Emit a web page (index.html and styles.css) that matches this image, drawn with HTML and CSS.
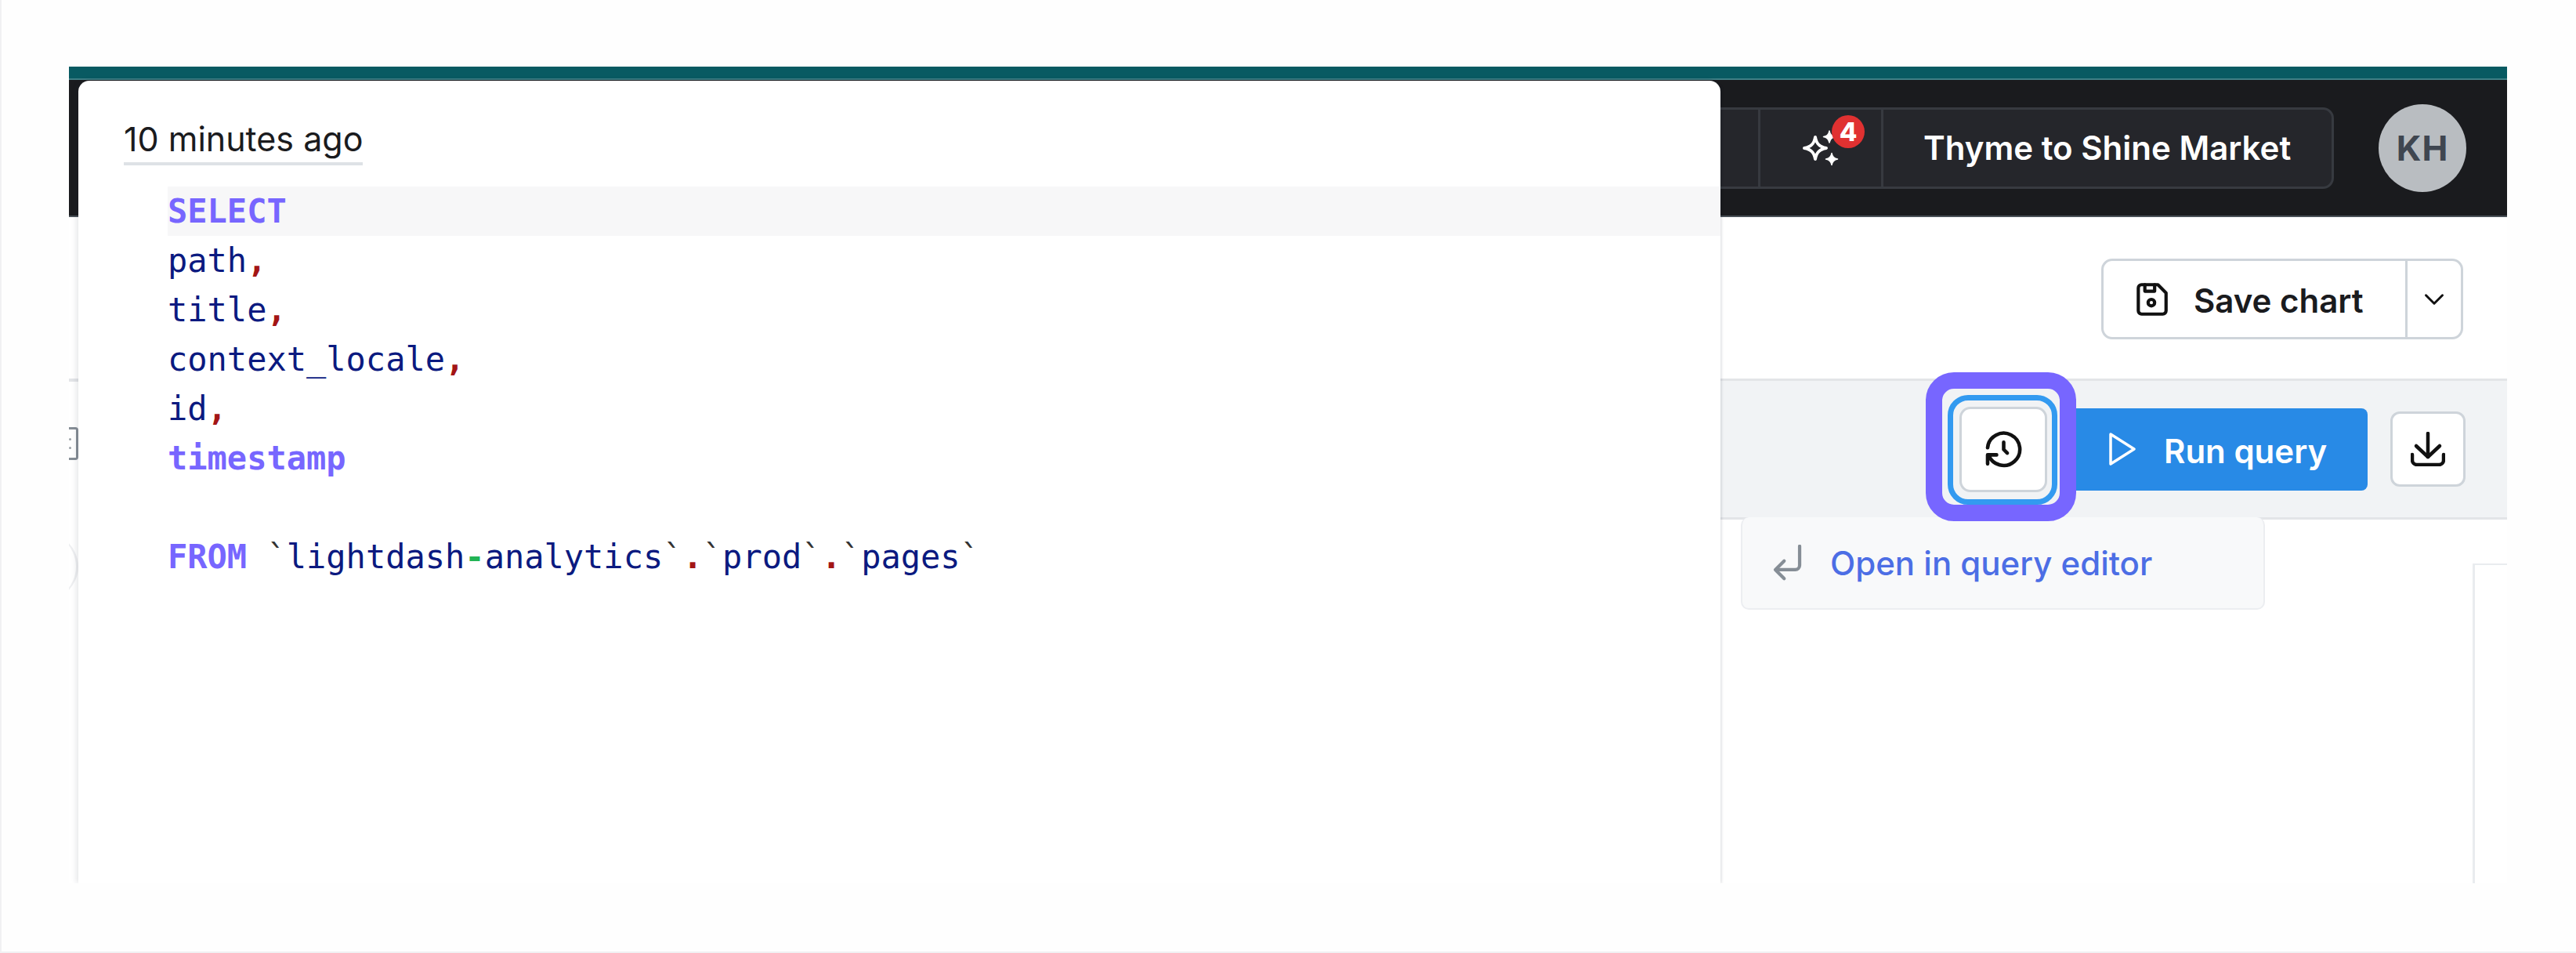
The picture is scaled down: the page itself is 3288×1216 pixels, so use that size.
FILE: index.html
```html
<!DOCTYPE html>
<html lang="en">
<head>
<meta charset="utf-8">
<title>Query history</title>
<link rel="stylesheet" href="styles.css">
</head>
<body>
<main class="frame">
  <div class="accent"></div>
  <header class="topbar">
    <div class="chip">
      <div class="chip-seg chip-spark">
        <svg class="spark" viewBox="0 0 64 64" aria-hidden="true">
          <path class="spark-outline" d="M18 13c1.400 8.500 5.500 12.600 14 14-8.500 1.400-12.600 5.500-14 14-1.400-8.500-5.500-12.600-14-14 8.500-1.400 12.600-5.500 14-14z"/>
          <path class="spark-solid" d="M39 33.500c.8 4.800 2.700 6.700 7.500 7.500-4.800.8-6.700 2.700-7.500 7.500-.8-4.800-2.700-6.700-7.500-7.500 4.800-.8 6.700-2.700 7.500-7.500z"/>
          <path class="spark-solid" d="M36 5c.8 4.800 2.700 6.700 7.500 7.500-4.800.8-6.700 2.700-7.500 7.500-.8-4.800-2.700-6.700-7.500-7.500 4.800-.8 6.700-2.700 7.500-7.500z"/>
        </svg>
        <span class="badge">4</span>
      </div>
      <div class="chip-seg chip-name">Thyme to Shine Market</div>
    </div>
    <div class="avatar">KH</div>
  </header>
  <section class="titlebar">
    <div class="save-group">
      <button class="save-main">
        <svg class="icon-save" viewBox="0 0 24 24" aria-hidden="true">
          <path d="M6 3h10l5 5v11a2 2 0 0 1-2 2H6a2 2 0 0 1-2-2V5a2 2 0 0 1 2-2z"/>
          <circle cx="12" cy="14" r="2"/>
          <path d="M14 3v4H8V3"/>
        </svg>
        <span class="btn-label">Save chart</span>
      </button>
      <button class="save-more" aria-label="More">
        <svg class="icon-chevron" viewBox="0 0 24 24" aria-hidden="true"><path d="M5 8.500l7 7 7-7"/></svg>
      </button>
    </div>
  </section>
  <section class="toolbar">
    <div class="sidecap">
      <span class="sidecap-box"><i></i><i></i></span>
    </div>
    <div class="band">
      <button class="history" aria-label="History">
        <svg class="icon-history" viewBox="0 0 24 24" aria-hidden="true">
          <path d="M12 8v4l2 2"/>
          <path d="M3.050 11a9 9 0 1 1 .5 4m-.5 5v-5h5"/>
        </svg>
      </button>
      <button class="run">
        <svg class="icon-play" viewBox="0 0 34 42" aria-hidden="true"><path d="M2 2l30 19L2 40z"/></svg>
        <span class="btn-label">Run query</span>
      </button>
      <button class="download" aria-label="Download">
        <svg class="icon-download" viewBox="0 0 44 44" aria-hidden="true">
          <path d="M2 29v7a6 6 0 0 0 6 6h28a6 6 0 0 0 6-6v-7"/>
          <path d="M7 18l15 14 15-14"/>
          <path d="M22 2v30"/>
        </svg>
      </button>
    </div>
  </section>
  <section class="content">
    <div class="sidearc"></div>
    <div class="panel"></div>
  </section>

  <div class="menu">
    <svg class="icon-return" viewBox="0 0 40 50" aria-hidden="true"><path d="M36 2v26a6 6 0 0 1-6 6H4"/><path d="M15 22L3 34l12 12"/></svg>
    <span>Open in query editor</span>
  </div>
  <div class="callout"></div>

  <aside class="popup">
    <div class="popup-time"><span>10 minutes ago</span></div>
    <div class="code">
      <div class="line line-active"><b class="kw">SELECT</b></div>
      <div class="line">path<span class="pn">,</span></div>
      <div class="line">title<span class="pn">,</span></div>
      <div class="line">context_locale<span class="pn">,</span></div>
      <div class="line">id<span class="pn">,</span></div>
      <div class="line"><b class="kw">timestamp</b></div>
      <div class="line"></div>
      <div class="line"><b class="kw">FROM</b> <span class="tick">`</span>lightdash<span class="op">-</span>analytics<span class="tick">`</span><span class="pn">.</span><span class="tick">`</span>prod<span class="tick">`</span><span class="pn">.</span><span class="tick">`</span>pages<span class="tick">`</span></div>
    </div>
  </aside>
</main>
</body>
</html>
```
FILE: styles.css
```css
* { box-sizing: border-box; }
html, body { margin: 0; padding: 0; }
body {
  width: 3288px;
  height: 1216px;
  overflow: hidden;
  background: #fefefe;
  border-left: 2px solid #f1f1f3;
  border-bottom: 2px solid #f1f1f3;
  padding: 85px 0 0 86px;
  font-family: Inter, "Liberation Sans", sans-serif;
}
button { font: inherit; padding: 0; cursor: pointer; }

.frame {
  position: relative;
  width: 3112px;
  height: 1042px;
  overflow: hidden;
  display: flex;
  flex-direction: column;
  background: #fff;
}
.accent { height: 17px; flex: none; background: #085a62; border-bottom: 2px solid #3f7f86; }

.topbar {
  height: 175px;
  flex: none;
  display: flex;
  align-items: center;
  justify-content: flex-end;
  gap: 57px;
  padding-right: 52px;
  background: #1a1b1e;
  border-bottom: 2px solid #495057;
}
.chip {
  width: 900px;
  height: 104px;
  display: flex;
  background: #25262b;
  border: 3px solid #373a40;
  border-radius: 14px;
}
.chip-seg { display: flex; align-items: center; height: 100%; }
.chip-spark {
  position: relative;
  width: 160px;
  margin-left: 162px;
  border-left: 3px solid #373a40;
  border-right: 3px solid #373a40;
}
.spark { position: absolute; left: 52px; top: 22px; width: 64px; height: 64px; }
.spark-outline { fill: none; stroke: #fff; stroke-width: 4; stroke-linejoin: round; }
.spark-solid { fill: #fff; stroke: #fff; stroke-width: 1.500; stroke-linejoin: round; }
.badge {
  position: absolute;
  left: 91px;
  top: 7px;
  width: 42px;
  height: 42px;
  border-radius: 50%;
  background: #e03131;
  color: #fff;
  font-size: 33px;
  font-weight: 800;
  line-height: 42px;
  text-align: center;
}
.chip-name {
  flex: 1;
  padding-left: 51px;
  color: #fff;
  font-size: 42px;
  font-weight: 600;
  white-space: nowrap;
}
.avatar {
  width: 112px;
  height: 112px;
  flex: none;
  border-radius: 50%;
  background: #b9bdc1;
  color: #3f4650;
  display: flex;
  align-items: center;
  justify-content: center;
  font-size: 44px;
  font-weight: 700;
  letter-spacing: 1px;
}

.titlebar {
  height: 206px;
  flex: none;
  display: flex;
  justify-content: flex-end;
  padding: 53px 56px 0 0;
}
.save-group {
  width: 462px;
  height: 103px;
  display: flex;
  background: #fff;
  border: 3px solid #ced4da;
  border-radius: 14px;
}
.save-main {
  width: 388px;
  display: flex;
  align-items: center;
  gap: 29px;
  padding-left: 40px;
  background: none;
  border: 0;
  border-right: 3px solid #ced4da;
  color: #1a1b1e;
  font-size: 42px;
  font-weight: 600;
  white-space: nowrap;
}
.btn-label { padding-top: 4px; }
.save-more { flex: 1; display: flex; align-items: center; justify-content: center; background: none; border: 0; }
.icon-save { width: 50px; height: 50px; flex: none; margin-left: -4px; fill: none; stroke: #111; stroke-width: 2; stroke-linejoin: round; stroke-linecap: round; }
.icon-chevron { width: 36px; height: 36px; fill: none; stroke: #111; stroke-width: 2; stroke-linecap: round; stroke-linejoin: round; }

.toolbar { height: 180px; flex: none; display: flex; }
.sidecap { width: 40px; flex: none; padding-top: 58px; overflow: hidden; border-top: 4px solid #e3e5e8; }
.sidecap-box {
  display: flex;
  flex-direction: column;
  justify-content: center;
  gap: 8px;
  width: 12px;
  height: 42px;
  border: 3px solid #868e96;
  border-left: 0;
  border-radius: 0 4px 4px 0;
}
.sidecap-box i { width: 3px; height: 3px; border-radius: 50%; background: #9aa0a6; }
.band {
  flex: 1;
  display: flex;
  align-items: center;
  justify-content: flex-end;
  padding-right: 53px;
  background: #f1f3f5;
  border-top: 3px solid #e3e5e8;
  border-bottom: 3px solid #e3e5e8;
}
.history {
  position: relative;
  width: 112px;
  height: 109px;
  margin-right: 24px;
  display: flex;
  align-items: center;
  justify-content: center;
  background: #fff;
  border: 3px solid #ced4da;
  border-radius: 14px;
}
.history::before {
  content: "";
  position: absolute;
  inset: -18px -16px -19px -18px;
  border: 7px solid #339af0;
  border-radius: 26px;
}
.icon-history { width: 55px; height: 55px; fill: none; stroke: #111; stroke-width: 2; stroke-linecap: round; stroke-linejoin: round; }
.run {
  width: 385px;
  height: 105px;
  margin-right: 29px;
  display: flex;
  align-items: center;
  gap: 36px;
  padding-left: 55px;
  background: #288ae6;
  border: 0;
  border-radius: 8px;
  color: #fff;
  font-size: 42px;
  font-weight: 600;
  white-space: nowrap;
}
.icon-play { width: 34px; height: 42px; flex: none; fill: none; stroke: #fff; stroke-width: 3.500; stroke-linejoin: round; }
.download {
  width: 96px;
  height: 96px;
  display: flex;
  align-items: center;
  justify-content: center;
  background: #fff;
  border: 3px solid #ced4da;
  border-radius: 12px;
}
.icon-download { width: 44px; height: 44px; fill: none; stroke: #111; stroke-width: 4.500; stroke-linecap: round; stroke-linejoin: round; }

.content { flex: 1; display: flex; justify-content: space-between; padding-top: 56px; }
.sidearc {
  position: relative;
  top: -44px;
  width: 112px;
  height: 96px;
  margin-left: -100px;
  border-right: 3px solid #eeeff1;
  border-radius: 50%;
  align-self: flex-start;
}
.panel { width: 44px; border-left: 3px solid #e9ecef; border-top: 2px solid #e9ecef; }

.menu {
  position: absolute;
  left: 2134px;
  top: 575px;
  width: 669px;
  height: 118px;
  display: flex;
  align-items: center;
  gap: 35px;
  padding-left: 39px;
  background: #f8f9fa;
  border: 2px solid #eceef1;
  border-top: 0;
  border-radius: 10px;
  color: #4c6ee5;
  font-size: 42px;
  font-weight: 500;
  white-space: nowrap;
}
.icon-return { width: 38px; height: 47px; flex: none; fill: none; stroke: #868e96; stroke-width: 4.500; stroke-linecap: round; stroke-linejoin: round; }

.callout {
  position: absolute;
  left: 2370px;
  top: 390px;
  width: 192px;
  height: 190px;
  border: 21px solid #7766ff;
  border-radius: 36px;
}

.popup {
  position: absolute;
  left: 12px;
  top: 18px;
  width: 2096px;
  bottom: 0;
  background: #fff;
  border-radius: 14px 14px 0 0;
  box-shadow: -3px 0 6px rgba(30, 35, 60, .10), 2px 0 3px rgba(30, 35, 60, .10);
  padding-top: 43px;
}
.popup-time { padding-left: 58px; height: 65px; display: flex; }
.popup-time span {
  height: 65px;
  padding-top: 8px;
  color: #1a1b1e;
  font-size: 43px;
  line-height: 47px;
  border-bottom: 4px solid #dee2e6;
  white-space: nowrap;
}
.code {
  margin: 27px 0 0 114px;
  font-family: "DejaVu Sans Mono", "Liberation Mono", monospace;
  font-size: 42px;
  line-height: 63px;
  color: #0b1a80;
}
.line { height: 63px; white-space: pre; }
.line-active { background: #f7f7f8; }
.kw { color: #7766ff; font-weight: 700; }
.pn { color: #a31515; font-weight: 700; }
.op { color: #22b455; font-weight: 700; }
.tick { color: #333; }
```
